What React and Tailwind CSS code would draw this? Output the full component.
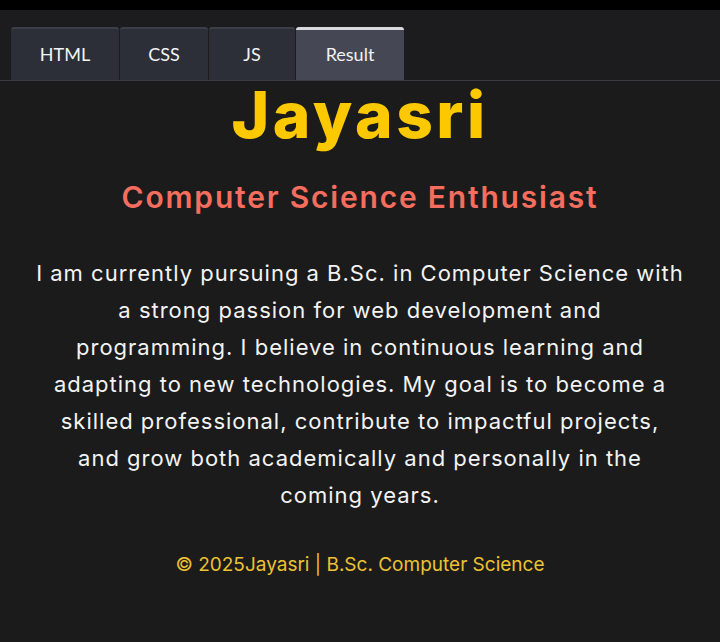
// App.jsx — profile page inside a code-pen style result pane

const TABS = [
  { id: 'html', label: 'HTML', w: 'w-[108px]' },
  { id: 'css', label: 'CSS', w: 'w-[88px]' },
  { id: 'js', label: 'JS', w: 'w-[86px]' },
  { id: 'result', label: 'Result', w: 'w-[108px]', active: true },
]

// line breaks kept as in the rendered original
const ABOUT = [
  'I am currently pursuing a B.Sc. in Computer Science with',
  'a strong passion for web development and',
  'programming. I believe in continuous learning and',
  'adapting to new technologies. My goal is to become a',
  'skilled professional, contribute to impactful projects,',
  'and grow both academically and personally in the',
  'coming years.',
]

export default function App() {
  return (
    <div className="min-h-[642px] h-[642px] bg-[#1b1b1b] flex flex-col overflow-hidden">
      {/* ── Top strip ─────────────────────────────── */}
      <div className="h-[10px] bg-black shrink-0" />

      {/* ── Tabs ──────────────────────────────────── */}
      <div className="h-[71px] shrink-0 bg-[#1c1c1e] border-b border-[#3b3c42] flex items-end pl-[11px] gap-[1px]">
        {TABS.map((t) => (
          <div
            key={t.id}
            className={`${t.w} h-[53px] rounded-t-[3px] flex items-center justify-center
                        text-[18px] font-['Lato',sans-serif]
                        ${t.active
                          ? 'bg-[#454854] text-[#f2f2f4] border-t-[3px] border-[#d8d8de] pb-[2px]'
                          : 'bg-[#2c2f38] text-[#f4f4f6] border-t-2 border-[#3c3f48]'}`}
          >
            {t.label}
          </div>
        ))}
      </div>

      {/* ── Content ───────────────────────────────── */}
      <main className="flex-1 flex flex-col items-center text-center font-['Inter',sans-serif] px-[20px]">
        <h1 className="text-[64px] leading-[72px] font-extrabold text-[#fcc900] -mt-[2px] tracking-[3.5px]">
          Jayasri
        </h1>
        <h2 className="text-[30px] leading-[40px] font-semibold text-[#f46d5e] mt-[26px] tracking-[1.8px]">
          Computer Science Enthusiast
        </h2>
        <p className="text-[22px] leading-[37px] text-[#f3f3f3] mt-[38px] tracking-[1px]">
          {ABOUT.map((line, i) => (
            <span key={i} className="block whitespace-nowrap">{line}</span>
          ))}
        </p>
        <footer className="text-[19px] leading-[26px] text-[#ecc233] mt-[38px]">
          © 2025Jayasri | B.Sc. Computer Science
        </footer>
      </main>
    </div>
  )
}
